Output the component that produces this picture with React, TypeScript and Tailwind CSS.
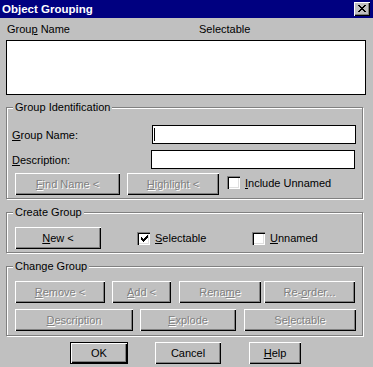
import type { ReactNode } from 'react';

const bevel =
  'shadow-[inset_1px_1px_0_#fff,inset_-1px_-1px_0_#000,inset_-2px_-2px_0_#808080]';

function Btn({
  children,
  disabled,
  primary,
  className = '',
}: {
  children: ReactNode;
  disabled?: boolean;
  primary?: boolean;
  className?: string;
}) {
  return (
    <div
      className={`h-[22px] flex items-center justify-center bg-[#c0c0c0] ${bevel} ${
        primary ? 'border border-black' : ''
      } ${disabled ? 'text-[#808080] [text-shadow:1px_1px_0_#fff]' : 'text-black'} ${className}`}
    >
      {children}
    </div>
  );
}

// pixel glyphs, Win95 style
const closeRows = ['11000011', '01100110', '00111100', '00011000', '00111100', '01100110', '11000011'];
const checkRows = ['0000001', '0000011', '1000111', '1101110', '1111100', '0111000', '0010000'];

function Pixels({ rows }: { rows: string[] }) {
  const w = rows[0].length;
  return (
    <svg width={w} height={rows.length} viewBox={`0 0 ${w} ${rows.length}`} shapeRendering="crispEdges">
      {rows.map((r, y) =>
        r.split('').map((c, x) => (c === '1' ? <rect key={`${x}-${y}`} x={x} y={y} width={1} height={1} fill="#000" /> : null))
      )}
    </svg>
  );
}

function Check({ checked }: { checked?: boolean }) {
  return (
    <div className="w-[13px] h-[13px] shrink-0 bg-white flex items-center justify-center shadow-[inset_1px_1px_0_#808080,inset_2px_2px_0_#000,inset_-1px_-1px_0_#fff,inset_-2px_-2px_0_#dfdfdf]">
      {checked && (
        <div className="ml-[1px] mt-[1px]">
          <Pixels rows={checkRows} />
        </div>
      )}
    </div>
  );
}

function Group({ title, className = '', children }: { title: string; className?: string; children: ReactNode }) {
  return (
    <div
      className={`relative w-[357px] border border-[#808080] shadow-[inset_1px_1px_0_#fff,1px_1px_0_#fff] ${className}`}
    >
      <span className="absolute -top-[8px] left-[6px] px-[2px] bg-[#c0c0c0] leading-[14px]">{title}</span>
      {children}
    </div>
  );
}

export default function App() {
  return (
    <div className="w-[373px] h-[367px] overflow-hidden bg-[#c0c0c0] text-[11px] leading-[14px] text-black font-['Liberation_Sans',Arial,sans-serif]">
      {/* Title bar */}
      <div className="h-[18px] bg-[#000080] flex items-center justify-between pl-[2px] pr-[3px]">
        <span className="text-white font-bold text-[11.5px]">Object Grouping</span>
        <div className={`w-[16px] h-[14px] bg-[#c0c0c0] flex items-center justify-center ${bevel}`}>
          <div className="-mt-[1px] -ml-[1px]">
            <Pixels rows={closeRows} />
          </div>
        </div>
      </div>

      <div className="px-[6px]">
        {/* List header */}
        <div className="mt-[4px] h-[14px] flex">
          <span className="w-[193px] pl-[1px]">
            Grou<u>p</u> Name
          </span>
          <span>Selectable</span>
        </div>
        <div className="mt-[4px] h-[55px] w-[360px] bg-white border border-black" />

        {/* Group Identification */}
        <Group title="Group Identification" className="mt-[12px] h-[92px]">
          <div className="pt-[17px] pl-[5px]">
            <div className="flex items-center h-[19px]">
              <span className="w-[140px]">
                <u>G</u>roup Name:
              </span>
              <div className="w-[204px] h-[19px] bg-white border border-black flex items-center">
                <span className="ml-[1px] w-[1px] h-[13px] bg-black" />
              </div>
            </div>
            <div className="flex items-center h-[19px] mt-[6px]">
              <span className="w-[139px]">
                <u>D</u>escription:
              </span>
              <div className="w-[204px] h-[19px] bg-white border border-black" />
            </div>
            <div className="flex items-center mt-[4px] ml-[3px]">
              <Btn disabled className="w-[105px]">
                <u>F</u>ind Name &lt;
              </Btn>
              <Btn disabled className="w-[92px] ml-[7px]">
                <u>H</u>ighlight &lt;
              </Btn>
              <div className="ml-[8px] -mt-[3px] flex items-center">
                <Check />
                <span className="ml-[5px]">
                  <u>I</u>nclude Unnamed
                </span>
              </div>
            </div>
          </div>
        </Group>

        {/* Create Group */}
        <Group title="Create Group" className="mt-[13px] h-[41px]">
          <div className="pt-[14px] pl-[8px] flex items-center">
            <Btn className="w-[86px]">
              <u>N</u>ew &lt;
            </Btn>
            <div className="ml-[36px] w-[115px] flex items-center">
              <Check checked />
              <span className="ml-[5px]">
                <u>S</u>electable
              </span>
            </div>
            <div className="flex items-center">
              <Check />
              <span className="ml-[5px]">
                <u>U</u>nnamed
              </span>
            </div>
          </div>
        </Group>

        {/* Change Group */}
        <Group title="Change Group" className="mt-[13px] h-[70px]">
          <div className="pt-[14px] pl-[8px]">
            <div className="flex">
              <Btn disabled className="w-[90px]">
                <u>R</u>emove &lt;
              </Btn>
              <Btn disabled className="w-[59px] ml-[7px]">
                <u>A</u>dd &lt;
              </Btn>
              <Btn disabled className="w-[82px] ml-[8px]">
                Rena<u>m</u>e
              </Btn>
              <Btn disabled className="w-[91px] ml-[3px]">
                Re-<u>o</u>rder...
              </Btn>
            </div>
            <div className="flex mt-[6px]">
              <Btn disabled className="w-[118px]">
                <u>D</u>escription
              </Btn>
              <Btn disabled className="w-[96px] ml-[7px]">
                <u>E</u>xplode
              </Btn>
              <Btn disabled className="w-[112px] ml-[8px]">
                Se<u>l</u>ectable
              </Btn>
            </div>
          </div>
        </Group>

        {/* Dialog buttons */}
        <div className="flex mt-[6px] ml-[64px]">
          <Btn primary className="w-[58px]">
            OK
          </Btn>
          <Btn className="w-[66px] ml-[27px]">Cancel</Btn>
          <Btn className="w-[52px] ml-[28px]">
            <u>H</u>elp
          </Btn>
        </div>
      </div>
    </div>
  );
}
